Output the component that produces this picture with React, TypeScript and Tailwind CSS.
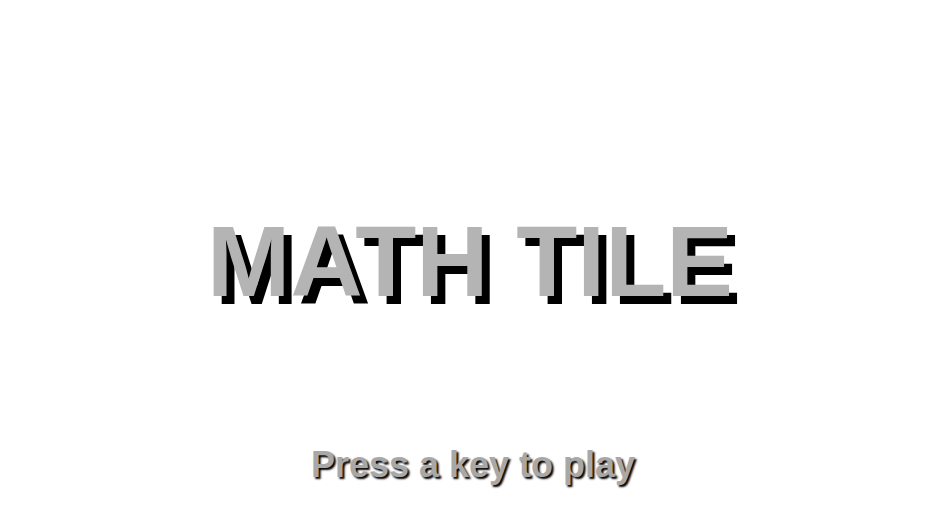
export default function App() {
  return (
    <div className="w-full h-[529px] bg-white flex flex-col items-center overflow-hidden font-['Liberation_Sans',Arial,sans-serif]">
      <h1 className="mt-[211px] text-[100px] leading-none font-bold text-[#b4b4b4] whitespace-nowrap [text-shadow:8px_8px_0_#000]">
        MATH TILE
      </h1>
      <p className="mt-[136px] ml-[6px] text-[36px] leading-none font-bold text-[#a8a8a8] whitespace-nowrap [text-shadow:2px_2px_2px_#000]">
        Press a key to play
      </p>
    </div>
  );
}
